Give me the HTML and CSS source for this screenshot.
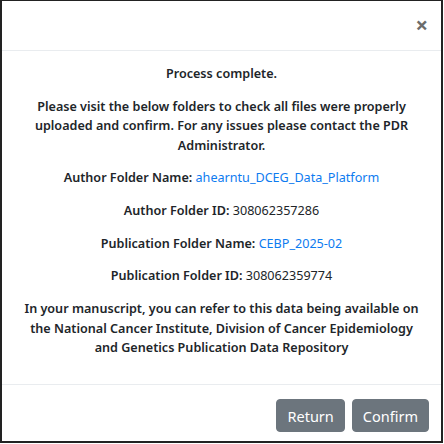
FILE: index.html
```html
<!DOCTYPE html>
<html>
<head>
<meta charset="utf-8">
<link rel="stylesheet" href="styles.css">
</head>
<body>
<div class="modal">
  <div class="modal-header">
    <button class="close" aria-label="Close">&times;</button>
  </div>
  <div class="modal-body">
    <p>Process complete.</p>
    <p>Please visit the below folders to check all files were properly uploaded and confirm. For any issues please contact the PDR Administrator.</p>
    <p>Author Folder Name: <a class="link" href="#">ahearntu_DCEG_Data_Platform</a></p>
    <p>Author Folder ID: <span class="val">308062357286</span></p>
    <p>Publication Folder Name: <a class="link" href="#">CEBP_2025-02</a></p>
    <p>Publication Folder ID: <span class="val">308062359774</span></p>
    <p>In your manuscript, you can refer to this data being available on the National Cancer Institute, Division of Cancer Epidemiology and Genetics Publication Data Repository</p>
  </div>
  <div class="modal-footer">
    <button class="btn">Return</button>
    <button class="btn">Confirm</button>
  </div>
</div>
</body>
</html>
```
FILE: styles.css
```css
html, body {
  margin: 0;
  padding: 0;
  background: #fff;
}
body {
  font-family: "Noto Sans", "Open Sans", sans-serif;
  color: #212529;
}
.modal {
  box-sizing: border-box;
  width: 443px;
  height: 443px;
  border-left: 2px solid #222;
  border-right: 2px solid #222;
  border-top: 1px solid #222;
  border-bottom: 2px solid #222;
  display: flex;
  flex-direction: column;
}
.modal-header {
  height: 49px;
  border-bottom: 1px solid #e9ecef;
  display: flex;
  justify-content: flex-end;
  align-items: center;
  padding: 0 13px;
}
.close {
  background: none;
  border: 0;
  font-family: "Noto Sans", sans-serif;
  font-size: 22px;
  font-weight: 700;
  color: #6c6c6c;
  padding: 0;
  line-height: 1;
  margin-top: -3px;
}
.modal-body {
  flex: 1;
  padding: 13px 16px 0;
  text-align: center;
  font-size: 12.6px;
  font-weight: 600;
  line-height: 19.5px;
}
.modal-body p {
  margin: 0 0 13.2px;
}
.link {
  color: #0d7bf0;
  font-weight: 400;
  text-decoration: none;
}
.val {
  font-weight: 400;
}
.modal-footer {
  border-top: 1px solid #e9ecef;
  height: 57px;
  box-sizing: border-box;
  display: flex;
  justify-content: flex-end;
  align-items: flex-start;
  gap: 7px;
  padding: 14px 12px 0 0;
}
.btn {
  font-family: "Noto Sans", sans-serif;
  font-size: 14.5px;
  color: #fff;
  background: #6c757d;
  border: 1px solid #6c757d;
  border-radius: 4px;
  height: 33px;
  padding: 0 10px;
}
```
